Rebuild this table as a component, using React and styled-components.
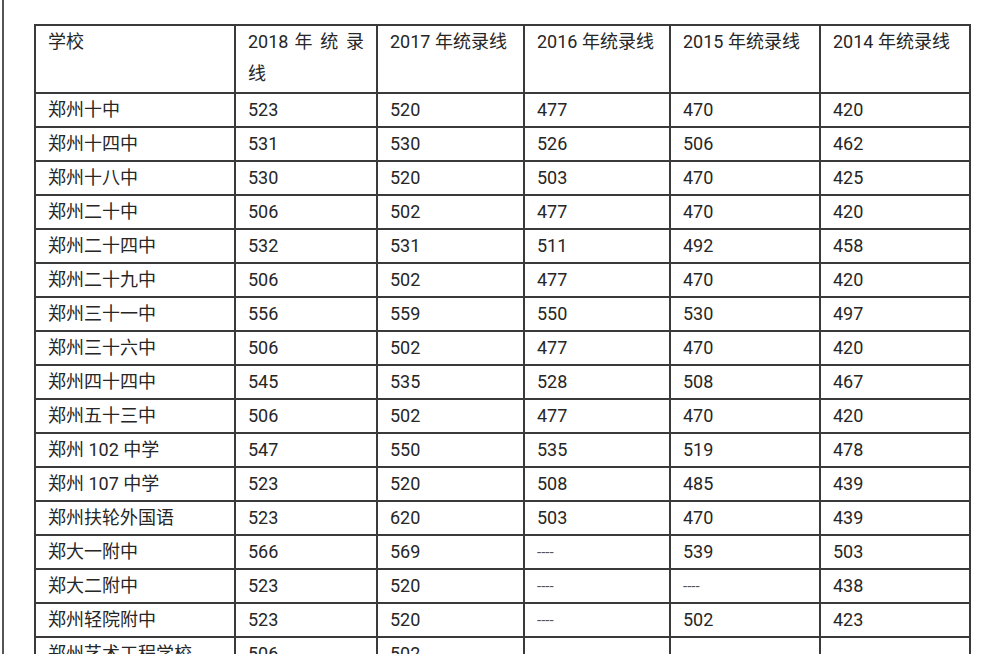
import React from 'react'
import styled, { createGlobalStyle } from 'styled-components'

const GlobalStyle = createGlobalStyle`
    html, body {
        margin: 0;
        padding: 0;
        background: #ffffff;
        height: 100%;
        overflow: hidden;
    }
`

const Page = styled.div`
    display: flex;
    align-items: stretch;
    height: 654px;
    padding-left: 2px;
    box-sizing: border-box;
    font-family: Roboto, "Noto Sans CJK SC", sans-serif;
    color: #262626;
`

const EdgeBar = styled.div`
    width: 2px;
    background-color: #555;
    flex-shrink: 0;
`

const TableWrap = styled.div`
    margin-left: 30px;
    margin-top: 24px;
`

const ScoreTable = styled.table`
    border-collapse: collapse;
    table-layout: fixed;
    width: 935px;
    font-size: 18px;
`

const HeadCell = styled.th`
    font-weight: normal;
    text-align: ${props => (props.justify ? 'justify' : 'left')};
    vertical-align: top;
    line-height: 32px;
    padding: 0 12px 2px 12px;
    border: 2px solid #3a3a3a;
`

const Cell = styled.td`
    line-height: 32px;
    height: 32px;
    padding: 0 12px;
    border: 2px solid #3a3a3a;
    white-space: nowrap;
    overflow: hidden;
`

const Dash = styled.span`
    display: inline-block;
    vertical-align: top;
    line-height: 32px;
    font-size: 15px;
    color: #555;
`

const columns = [
    { w: 200, label: '学校' },
    { w: 142, label: '2018 年 统 录 线', justify: true },
    { w: 147, label: '2017 年统录线' },
    { w: 146, label: '2016 年统录线' },
    { w: 150, label: '2015 年统录线' },
    { w: 150, label: '2014 年统录线' },
]

const rows = [
    ['郑州十中', '523', '520', '477', '470', '420'],
    ['郑州十四中', '531', '530', '526', '506', '462'],
    ['郑州十八中', '530', '520', '503', '470', '425'],
    ['郑州二十中', '506', '502', '477', '470', '420'],
    ['郑州二十四中', '532', '531', '511', '492', '458'],
    ['郑州二十九中', '506', '502', '477', '470', '420'],
    ['郑州三十一中', '556', '559', '550', '530', '497'],
    ['郑州三十六中', '506', '502', '477', '470', '420'],
    ['郑州四十四中', '545', '535', '528', '508', '467'],
    ['郑州五十三中', '506', '502', '477', '470', '420'],
    ['郑州 102 中学', '547', '550', '535', '519', '478'],
    ['郑州 107 中学', '523', '520', '508', '485', '439'],
    ['郑州扶轮外国语', '523', '620', '503', '470', '439'],
    ['郑大一附中', '566', '569', '----', '539', '503'],
    ['郑大二附中', '523', '520', '----', '----', '438'],
    ['郑州轻院附中', '523', '520', '----', '502', '423'],
    ['郑州艺术工程学校', '506', '502', '----', '----', '----'],
]

export default function App() {
    return (
        <Page>
            <GlobalStyle />
            <EdgeBar />
            <TableWrap>
                <ScoreTable>
                    <colgroup>
                        {columns.map((c, i) => (
                            <col key={i} style={{ width: c.w }} />
                        ))}
                    </colgroup>
                    <thead>
                        <tr>
                            {columns.map((c, i) => (
                                <HeadCell key={i} justify={c.justify}>{c.label}</HeadCell>
                            ))}
                        </tr>
                    </thead>
                    <tbody>
                        {rows.map((r, i) => (
                            <tr key={i}>
                                {r.map((v, j) => (
                                    <Cell key={j}>{v === '----' ? <Dash>{v}</Dash> : v}</Cell>
                                ))}
                            </tr>
                        ))}
                    </tbody>
                </ScoreTable>
            </TableWrap>
        </Page>
    )
}
